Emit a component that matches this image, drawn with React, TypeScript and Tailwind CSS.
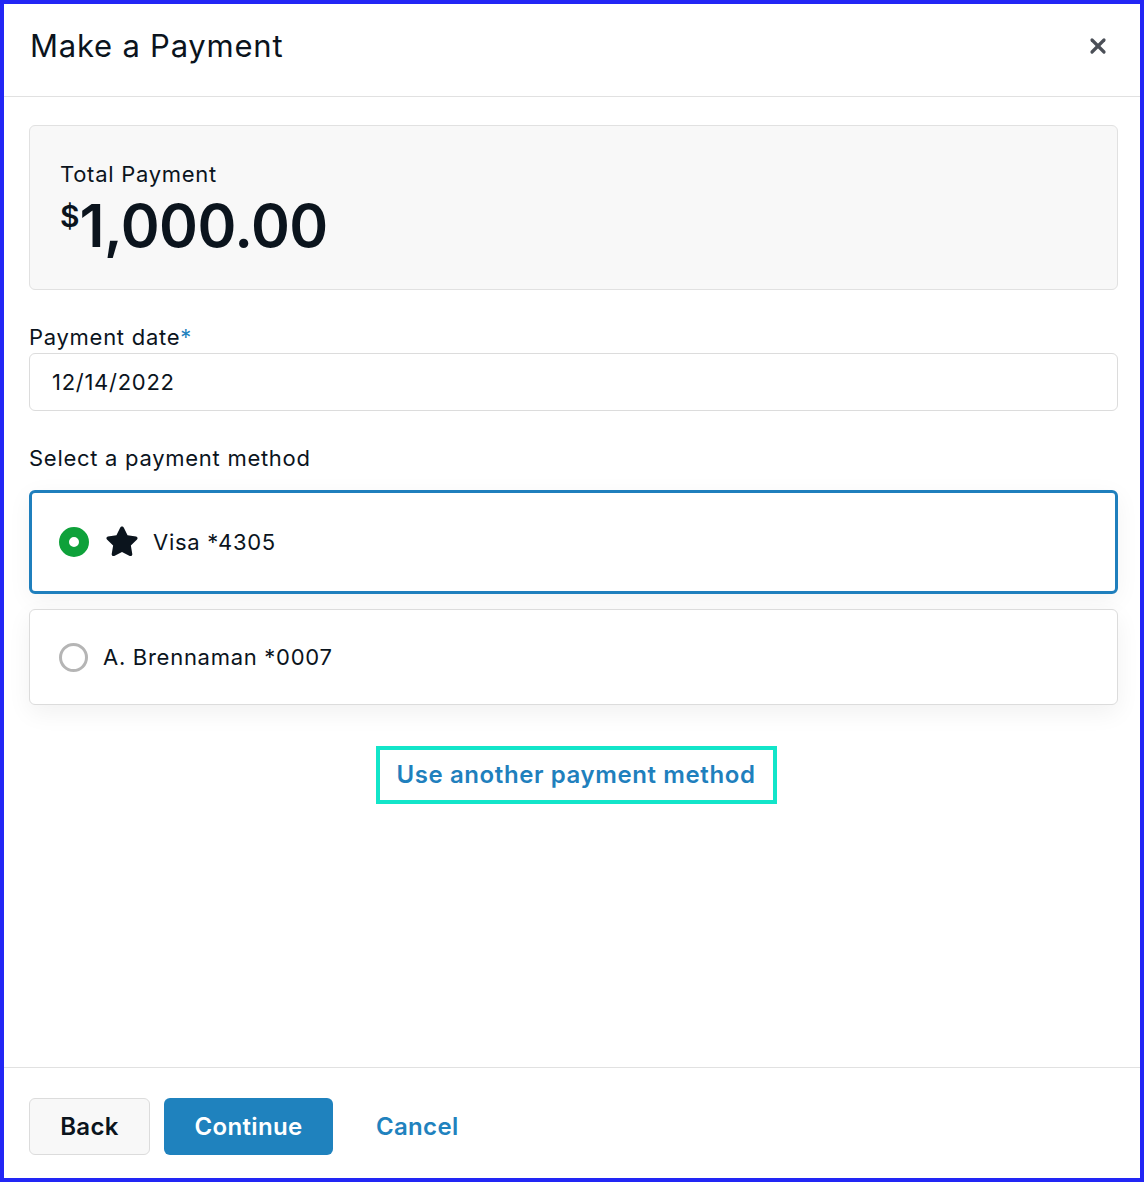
import React, { useState } from 'react';
import { X } from 'lucide-react';

const methods = [
  { id: 'visa', label: 'Visa *4305', starred: true },
  { id: 'bank', label: 'A. Brennaman *0007', starred: false },
];

function Star() {
  return (
    <svg width="38" height="38" viewBox="0 0 24 24" className="shrink-0 -mr-[2px]">
      <path
        d="M12 2.2c.5 0 .9.3 1.1.7l2.4 4.9 5.4.8c.9.1 1.3 1.2.6 1.8l-3.9 3.8.9 5.4c.2.9-.8 1.6-1.6 1.2L12 18.3l-4.9 2.5c-.8.4-1.8-.3-1.6-1.2l.9-5.4-3.9-3.8c-.7-.6-.3-1.7.6-1.8l5.4-.8 2.4-4.9c.2-.4.6-.7 1.1-.7z"
        fill="#0b141d"
      />
    </svg>
  );
}

export default function App() {
  const [selected, setSelected] = useState('visa');

  return (
    <div
      className="w-[1144px] h-[1182px] border-4 border-[#2226f5] bg-white flex flex-col text-[#0b141d]"
      style={{ fontFamily: 'Inter, "Noto Sans", sans-serif' }}
    >
      {/* Header */}
      <div className="h-[93px] shrink-0 border-b border-[#e1e1e1] flex items-start justify-between pl-[26px] pr-[30px] pt-[24px]">
        <h1 className="text-[31px] leading-[36px] font-normal tracking-[0.025em]">Make a Payment</h1>
        <button className="text-[#4b4f57] mt-[6px]">
          <X size={24} strokeWidth={3.2} />
        </button>
      </div>

      {/* Body */}
      <div className="flex-1 pl-[25px] pr-[22px] pt-[28px] tracking-[0.045em]">
        <div className="h-[165px] rounded-md border border-[#e1e1e1] bg-[#f8f8f8] pl-[30px] pt-[33px]">
          <div className="text-[22px] leading-[30px]">Total Payment</div>
          <div className="flex items-start mt-[7px] tracking-normal">
            <span className="text-[30px] font-semibold leading-none mt-[5px]">$</span>
            <span className="text-[59px] font-semibold leading-none tracking-[-0.5px]">1,000.00</span>
          </div>
        </div>

        <div className="mt-[33px] text-[22px] leading-[28px]">
          Payment date<span className="text-[#1f82be]">*</span>
        </div>
        <div className="mt-[2px] h-[58px] rounded-md border border-[#dcdcdc] flex items-center pl-[22px] text-[22px]">
          12/14/2022
        </div>

        <div className="mt-[33px] text-[22px] leading-[28px]">Select a payment method</div>

        <div className="mt-[18px] flex flex-col gap-[15px]">
          {methods.map((m) => {
            const active = selected === m.id;
            return (
              <button
                key={m.id}
                onClick={() => setSelected(m.id)}
                className={
                  active
                    ? 'h-[104px] rounded-md border-[3px] border-[#1f7fbd] bg-white flex items-center pl-[27px] gap-[14px] text-left shadow-[0_6px_24px_rgba(0,0,0,0.05)]'
                    : 'h-[96px] rounded-md border border-[#dcdcdc] bg-white flex items-center pl-[29px] gap-[15px] text-left shadow-[0_8px_24px_rgba(0,0,0,0.06)]'
                }
              >
                {active ? (
                  <span className="w-[30px] h-[30px] rounded-full border-[10px] border-[#0ea13a] bg-white shrink-0" />
                ) : (
                  <span className="w-[29px] h-[29px] rounded-full border-[3px] border-[#b5b5b5] bg-white shrink-0" />
                )}
                {m.starred && <Star />}
                <span className="text-[22px]">{m.label}</span>
              </button>
            );
          })}
        </div>

        <div className="mt-[41px] flex justify-center pl-[5px]">
          <a className="w-[401px] h-[58px] border-4 border-[#12e5c9] flex items-center justify-center text-[24px] font-semibold text-[#1f80bd] tracking-[0.025em] cursor-pointer">
            Use another payment method
          </a>
        </div>
      </div>

      {/* Footer */}
      <div className="h-[111px] shrink-0 border-t border-[#e1e1e1] flex items-start gap-[14px] pl-[25px] pt-[30px] tracking-[0.02em]">
        <button className="w-[121px] h-[57px] rounded-md border border-[#dcdcdc] bg-[#f8f8f8] text-[24px] font-semibold">
          Back
        </button>
        <button className="w-[169px] h-[57px] rounded-md bg-[#1f82be] text-white text-[24px] font-semibold">
          Continue
        </button>
        <button className="h-[57px] px-[29px] text-[24px] font-semibold text-[#1f82be]">Cancel</button>
      </div>
    </div>
  );
}
